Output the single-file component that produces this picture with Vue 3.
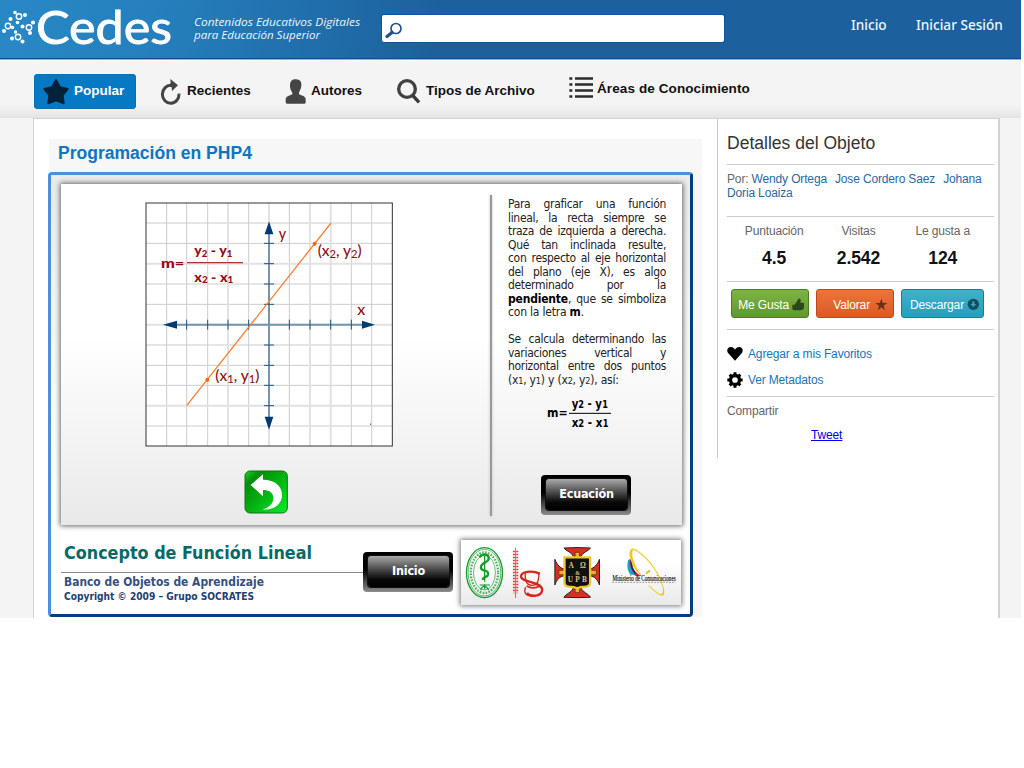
<script setup>
const columns = [80, 140, 203, 264, 326, 387, 448, 510, 572, 634, 695]
const rows = [85, 146, 207, 268, 329, 390, 451, 512, 572, 633, 694]
const heavyColumns = [264, 387, 510, 572]
const heavyRows = [207, 390, 633]
const xTicks = [140, 203, 264, 326, 448, 510, 572, 634]
const yTicks = [146, 207, 268, 329, 451, 512, 572, 633]
const firstParagraph = [
  'Para graficar una función',
  'lineal, la recta siempre se',
  'traza de izquierda a derecha.',
  'Qué tan inclinada resulte,',
  'con respecto al eje horizontal',
  'del plano (eje X), es algo',
  'determinado por la',
]
const secondParagraph = [
  'Se calcula determinando las',
  'variaciones vertical y',
  'horizontal entre dos puntos',
]
const stats = [
  { label: 'Puntuación', value: '4.5' },
  { label: 'Visitas', value: '2.542' },
  { label: 'Le gusta a', value: '124' },
]
</script>

<template>
  <div class="page">
    <header class="header">
      <svg class="brand" width="370" height="58" viewBox="0 0 370 58">
        <g fill="#fff">
          <circle cx="15" cy="12.5" r="1.8" /><circle cx="25" cy="15" r="2" /><circle cx="10.5" cy="19" r="2" />
          <circle cx="4" cy="31" r="2" /><circle cx="17.5" cy="22.5" r="1.8" /><circle cx="12.5" cy="27.5" r="1.7" />
          <circle cx="22.5" cy="26.5" r="2" /><circle cx="33" cy="22.5" r="2" /><circle cx="30" cy="33" r="2" />
          <circle cx="15.5" cy="32" r="1.7" /><circle cx="12" cy="38.5" r="2" /><circle cx="22.5" cy="41.5" r="2" />
        </g>
        <g fill="none" stroke="#fff" stroke-width="1.4">
          <circle cx="19" cy="16.5" r="2.7" /><circle cx="8" cy="26" r="2.7" /><circle cx="29" cy="27.5" r="2.7" /><circle cx="18" cy="37" r="2.7" />
        </g>
        <text class="brand-name" x="36" y="43.5" textLength="136" lengthAdjust="spacingAndGlyphs">Cedes</text>
        <text class="tagline" x="194" y="25.5" textLength="166" lengthAdjust="spacingAndGlyphs">Contenidos Educativos Digitales</text>
        <text class="tagline" x="194" y="39" textLength="126" lengthAdjust="spacingAndGlyphs">para Educación Superior</text>
      </svg>
      <div class="search">
        <svg width="18" height="18" viewBox="0 0 18 18">
          <circle cx="11" cy="6.5" r="5" fill="none" stroke="#24508f" stroke-width="1.7" />
          <path d="M7 10.5L2 14.5" stroke="#24508f" stroke-width="3.2" stroke-linecap="round" />
        </svg>
      </div>
      <nav class="account"><a class="home">Inicio</a><a>Iniciar Sesión</a></nav>
    </header>

    <nav class="menu">
      <a class="item popular">
        <svg width="26" height="26" viewBox="131 237 78 78">
          <path d="M170 240L182 262L205 267L190 286L193 310L170 301L147 310L150 286L135 267L158 262Z" fill="#012339" stroke="#012339" stroke-width="6" stroke-linejoin="round" />
        </svg>
        <span>Popular</span>
      </a>
      <a class="item">
        <svg width="22" height="27" viewBox="483 234 66 81">
          <path d="M537 281A25 27 0 1 1 513 256" fill="none" stroke="#444" stroke-width="9" />
          <path d="M511 237L534 256L516 273L515 262Q511 258 505 260L512 248Z" fill="#444" />
        </svg>
        <span>Recientes</span>
      </a>
      <a class="item">
        <svg width="22" height="27" viewBox="855 234 66 81">
          <path d="M887 238C902 238 905 248 904 258C903 269 898 273 897 278V283C907 287 917 289 917 298V308Q916 311 913 311H861Q857 311 857 307V298C858 289 868 287 877 283V278C875 273 870 269 870 257C870 246 874 238 887 238Z" fill="#454545" />
        </svg>
        <span>Autores</span>
      </a>
      <a class="item">
        <svg width="26" height="27" viewBox="78 234 78 81">
          <circle cx="111" cy="267" r="25" fill="none" stroke="#424242" stroke-width="10" />
          <path d="M128 286L147 307" stroke="#383838" stroke-width="10" />
        </svg>
        <span>Tipos de Archivo</span>
      </a>
      <a class="item areas">
        <svg width="24" height="24" viewBox="597 234 72 72">
          <path d="M615 238.500H669M615 256.500H669M615 274.500H669M615 292.500H669" stroke="#2b2b2b" stroke-width="8" />
          <path d="M598 238.500H607M598 256.500H607M598 274.500H607M598 292.500H607" stroke="#2b2b2b" stroke-width="8" />
        </svg>
        <span>Áreas de Conocimiento</span>
      </a>
    </nav>

    <main class="content">
      <section class="object">
        <h1>Programación en PHP4</h1>
        <div class="player">
          <div class="board">
            <div class="figure">
              <svg class="graph" width="248" height="245" viewBox="15 22 744 735">
                <rect x="18" y="25" width="739" height="729" fill="#fff" />
                <g stroke="#ccc" stroke-width="3">
                  <path v-for="x in columns" :key="'c' + x" :d="`M${x} 25V754`" />
                  <path v-for="y in rows" :key="'r' + y" :d="`M18 ${y}H757`" />
                </g>
                <g stroke="#e2e2e2" stroke-width="6">
                  <path v-for="x in heavyColumns" :key="'hc' + x" :d="`M${x} 27V752`" />
                  <path v-for="y in heavyRows" :key="'hr' + y" :d="`M20 ${y}H755`" />
                </g>
                <rect x="18" y="25" width="739" height="729" fill="none" stroke="#333" stroke-width="3" />
                <g stroke="#7594b4" stroke-width="6"><path d="M95 390H680" /><path d="M387 105V680" /></g>
                <g stroke="#245280" stroke-width="3">
                  <path v-for="x in xTicks" :key="'x' + x" :d="`M${x} 375V405`" />
                  <path v-for="y in yTicks" :key="'y' + y" :d="`M372 ${y}H402`" />
                </g>
                <g fill="#003a70">
                  <path d="M69 390L111 378V402Z" /><path d="M705 390L666 378V402Z" />
                  <path d="M387 80L400 119H374Z" /><path d="M387 705L400 666H374Z" />
                </g>
                <path d="M140 633L573 85" stroke="#f58233" stroke-width="4" />
                <circle cx="202" cy="555" r="6" fill="#f60" /><circle cx="524" cy="147" r="6" fill="#f60" />
                <rect x="690" y="687" width="3" height="3" fill="#222" />
                <g class="math">
                  <text x="416" y="133" textLength="22" lengthAdjust="spacingAndGlyphs">y</text>
                  <text x="652" y="361" textLength="24" lengthAdjust="spacingAndGlyphs">x</text>
                  <text x="533" y="185" textLength="132" lengthAdjust="spacingAndGlyphs">(x<tspan class="sub" dy="4">2</tspan><tspan dy="-4">, y</tspan><tspan class="sub" dy="4">2</tspan><tspan dy="-4">)</tspan></text>
                  <text x="226" y="560" textLength="132" lengthAdjust="spacingAndGlyphs">(x<tspan class="sub" dy="4">1</tspan><tspan dy="-4">, y</tspan><tspan class="sub" dy="4">1</tspan><tspan dy="-4">)</tspan></text>
                </g>
                <g class="slope">
                  <text x="63" y="220" textLength="70" lengthAdjust="spacingAndGlyphs">m=</text>
                  <text x="163" y="182" textLength="114" lengthAdjust="spacingAndGlyphs">y<tspan class="sub" dy="4">2</tspan><tspan dy="-4"> - y</tspan><tspan class="sub" dy="4">1</tspan></text>
                  <text x="163" y="262" textLength="117" lengthAdjust="spacingAndGlyphs">x<tspan class="sub" dy="4">2</tspan><tspan dy="-4"> - x</tspan><tspan class="sub" dy="4">1</tspan></text>
                  <path d="M141 204H309" stroke="#a33" stroke-width="4" />
                </g>
              </svg>
              <svg class="back" width="44" height="44" viewBox="614 59 132 132">
                <defs>
                  <linearGradient id="leaf" x1="0" y1="0" x2="1" y2="1">
                    <stop offset="0" stop-color="#19d92c" /><stop offset=".18" stop-color="#078d0b" /><stop offset=".4" stop-color="#04a50c" /><stop offset="1" stop-color="#05ed27" />
                  </linearGradient>
                </defs>
                <rect x="617" y="62" width="127" height="126" rx="15" fill="url(#leaf)" stroke="#147317" stroke-width="3" />
                <path d="M634 104L671 72V88C708 88 728 108 728 134C728 160 706 180 669 178C694 170 704 155 702 139C699 125 688 119 671 119V138Z" fill="#fff" />
              </svg>
            </div>
            <div class="divider"></div>
            <div class="lesson">
              <div class="prose">
                <p v-for="line in firstParagraph" :key="line">{{ line }}</p>
                <p><span><b>pendiente</b>,</span> que se simboliza</p>
                <p class="last">con la letra <b>m</b>.</p>
                <p class="gap"></p>
                <p v-for="line in secondParagraph" :key="line">{{ line }}</p>
                <p class="last">(x<small>1</small>, y<small>1</small>) y (x<small>2</small>, y<small>2</small>), así:</p>
              </div>
              <svg class="formula" width="64" height="34" viewBox="201 680 192 102">
                <text x="201" y="744" textLength="62" lengthAdjust="spacingAndGlyphs">m=</text>
                <text x="275" y="717" textLength="91" lengthAdjust="spacingAndGlyphs">y<tspan class="sub">2</tspan> - y</text><text class="sub" x="367" y="717" textLength="17" lengthAdjust="spacingAndGlyphs">1</text>
                <text x="275" y="772" textLength="92" lengthAdjust="spacingAndGlyphs">x<tspan class="sub">2</tspan> - x</text><text class="sub" x="368" y="772" textLength="17" lengthAdjust="spacingAndGlyphs">1</text>
                <path d="M267 732H393" stroke="#000" stroke-width="3" />
              </svg>
              <button class="dark"><span>Ecuación</span></button>
            </div>
          </div>
          <footer class="caption">
            <div class="titles">
              <svg width="303" height="70" viewBox="0 0 303 70">
                <text class="concept" x="4" y="22" textLength="248" lengthAdjust="spacingAndGlyphs">Concepto de Función Lineal</text>
                <path d="M1 35.500H303" stroke="#888" />
                <text class="bank" x="4" y="49" textLength="200" lengthAdjust="spacingAndGlyphs">Banco de Objetos de Aprendizaje</text>
                <text class="copy" x="4" y="63" textLength="190" lengthAdjust="spacingAndGlyphs">Copyright © 2009 – Grupo SOCRATES</text>
              </svg>
            </div>
            <button class="dark"><span>Inicio</span></button>
            <div class="sponsors">
              <svg width="220" height="65" viewBox="333 225 661 195">
                <g fill="none" stroke="#179a2e">
                  <ellipse cx="403.500" cy="323" rx="54" ry="75" stroke-width="4" />
                  <ellipse cx="403.500" cy="323" rx="49" ry="70" stroke-width="2" />
                  <ellipse cx="403.500" cy="323" rx="41" ry="61" stroke-width="7" stroke-dasharray="5 4" opacity=".75" />
                  <ellipse cx="403.500" cy="323" rx="33" ry="52" stroke-width="2" />
                  <path d="M404 270V350" stroke-width="4" />
                  <path d="M389 277C396 263 418 266 416 282C415 294 391 291 393 309C396 322 417 312 414 329C412 339 397 334 399 345" stroke-width="7" />
                  <path d="M389 360H420M392 375Q402 352 416 375M404 358V373" stroke-width="3.500" />
                </g>
                <g fill="none" stroke="#e03a35">
                  <path d="M497 248V399" stroke-width="2.500" />
                  <path d="M492 257V385M502 257V385" stroke-width="6" stroke-dasharray="5 4" />
                </g>
                <g fill="none" stroke="#d9251d">
                  <path d="M570 326C548 316 513 318 513 335C514 353 575 348 577 374C577 394 543 398 531 384" stroke-width="7" />
                  <path d="M526 323C525 351 531 361 547 361C562 361 567 350 567 323M527 367C521 383 526 393 548 394" stroke-width="4" />
                  <path d="M530 363Q550 374 570 363" stroke-width="5" />
                </g>
                <g stroke="#222" stroke-width="3" fill="#dc2d20">
                  <path d="M642 249Q682 246 722 249C717 258 698 261 693 275H671C667 261 648 258 642 249Z" />
                  <path d="M642 397Q682 399 722 397C717 386 698 383 693 368H671C667 383 648 386 642 397Z" />
                  <path d="M615 283C621 299 632 310 643 312V333C631 333 620 344 615 360Z" />
                  <path d="M749 283C743 299 733 310 720 312V333C733 333 744 344 749 360Z" />
                </g>
                <path d="M676 262H689V383H676ZM627 316H740V329H627Z" fill="#e6b32b" stroke="#4a2317" stroke-width="2" />
                <path d="M644 277H721V353Q721 363 708 365Q690 366 682 370Q674 366 657 365Q644 363 644 353Z" fill="#111" stroke="#ecc82f" stroke-width="7" />
                <g class="shield"><text x="656" y="308" textLength="52" lengthAdjust="spacing">A Ω</text><text x="676" y="329" class="tiny">&amp;</text><text x="654" y="352" textLength="57" lengthAdjust="spacing">UPB</text></g>
                <path d="M840 282C832 302 834 317 852 329C861 336 872 336 875 331C858 327 846 308 846 287Z" fill="#ce2440" />
                <path d="M835 286C831 302 832 316 842 329H858C844 318 838 303 840 282Z" fill="#19a4c5" />
                <path d="M845 283Q841 307 858 327" fill="none" stroke="#173370" stroke-width="5" />
                <path d="M862 258C848 246 843 262 852 288C860 310 868 322 877 332C856 320 840 288 839 266C840 247 853 246 862 258Z" fill="#f5c51b" />
                <path d="M854 253C900 277 940 342 942 380C943 397 929 394 897 361" fill="none" stroke="#f0cf3b" stroke-width="3.500" />
                <path d="M939 362C943 386 936 394 922 384Q947 401 942 375Z" fill="#f0bf1a" />
                <path d="M889 325L901 317" stroke="#e6bb2e" stroke-width="6" />
                <text class="ministry" x="788" y="347" textLength="190" lengthAdjust="spacingAndGlyphs">Ministerio de Comunicaciones</text>
                <path d="M788 352H978" stroke="#777" stroke-width="3" stroke-dasharray="4 5" />
              </svg>
            </div>
          </footer>
        </div>
      </section>

      <aside class="details">
        <h2>Detalles del Objeto</h2>
        <p class="authors">Por: <a>Wendy Ortega</a><a class="next">Jose Cordero Saez</a><a class="next">Johana</a><br /><a>Doria Loaiza</a></p>
        <div class="stats">
          <div v-for="stat in stats" :key="stat.label"><span>{{ stat.label }}</span><strong>{{ stat.value }}</strong></div>
        </div>
        <div class="actions">
          <a class="btn green">Me Gusta
            <svg width="13" height="13" viewBox="244 54 39 39"><path d="M245 74H252L265 55Q273 58 269 68H278Q282 70 280 76V84Q277 91 270 91H251Q246 91 245 86Z" fill="#2c471a" /></svg>
          </a>
          <a class="btn orange">Valorar
            <svg width="13" height="13" viewBox="498 54 39 39"><path d="M517 56L521.500 69H535L524 77L528 91L517 82L506 91L510 77L499 69H512.500Z" fill="#6c2f17" /></svg>
          </a>
          <a class="btn cyan">Descargar
            <svg width="13" height="13" viewBox="774 57 39 39"><circle cx="793" cy="76" r="17" fill="#144f61" /><path d="M790 67H796V75H802L793 84L784 75H790Z" fill="#38a4be" /></svg>
          </a>
        </div>
        <div class="links">
          <a><svg width="16" height="16" viewBox="52 201 48 48"><path d="M76 245L56 223C49 214 55 204 63 204C71 204 74 209 76 212C78 209 81 204 89 204C97 204 103 214 96 223Z" fill="#000" /></svg>Agregar a mis Favoritos</a>
          <a><svg width="16" height="16" viewBox="52 277 48 48"><circle cx="76" cy="301" r="13.500" fill="none" stroke="#000" stroke-width="10" /><path d="M76 278V286M76 316V324M53 301H61M91 301H99M60 285L66 291M86 311L92 317M60 317L66 311M86 291L92 285" stroke="#000" stroke-width="9" /></svg>Ver Metadatos</a>
        </div>
        <div class="share"><span>Compartir</span><a>Tweet</a></div>
      </aside>
    </main>
  </div>
</template>

<style>
body { background: #fff; }
</style>

<style scoped>
* { box-sizing: border-box; }
.page { width: 1021px; height: 618px; background: #f4f4f4; font-family: "Liberation Sans", Arial, sans-serif; font-size: 12px; letter-spacing: -.15px; color: #666; }
.header { height: 60px; display: flex; background: linear-gradient(100deg, #2888c5 0, #2580bd 15%, #1c619d 43%, #1c619d 100%); border-bottom: 1px solid #8ab6de; box-shadow: inset 0 -1px #0a4e91; }
svg { overflow: visible; letter-spacing: 0; }
.brand { flex: none; display: block; }
.brand-name { font: 47px Lato, sans-serif; fill: #fff; stroke: #fff; stroke-width: .9px; }
.tagline { font: italic 11.5px "Open Sans", sans-serif; fill: #e9f4fc; }
.search { margin: 15px 0 0 12px; width: 342px; height: 27px; background: #fff; border-radius: 2px; padding: 7px 0 0 3px; box-shadow: 0 0 0 1px #0c559a; }
.search svg { display: block; }
.account { margin-left: 127px; display: flex; padding-top: 15px; font: 500 13.6px/20px "Noto Sans", sans-serif; letter-spacing: 0; color: #eff6fc; white-space: nowrap; }
.home { width: 65px; }
.menu { height: 58px; padding: 13px 0 0 34px; display: grid; grid-template-columns: 127px 124px 111px 173px auto; border-top: 1px solid #fff; background: linear-gradient(#f4f4f4 78%, #e4e4e4 100%); color: #111; font-size: 13.5px; letter-spacing: 0; font-weight: bold; }
.item { display: flex; height: 35px; align-items: center; gap: 4px; white-space: nowrap; }
.item svg { flex: none; }
.item span { position: relative; top: -1px; }
.popular { width: 102px; background: #0679c4; border-radius: 4px; color: #fff; padding-left: 9px; gap: 5px; box-shadow: inset 0 0 0 1px #0671b8; }
.areas { height: 30px; letter-spacing: .1px; }
.content { width: 967px; height: 500px; margin-left: 33px; display: flex; background: #fff; border: solid #d2d2d2; border-width: 1px 2px 0 1px; }
.object { width: 682px; flex: none; padding: 20px 0 0 14px; }
h1 { margin: 0 0 0 1px; height: 33px; width: 653px; padding-left: 9px; background: #f7f7f7; color: #0f76be; font-size: 17.55px; letter-spacing: 0; line-height: 29px; }
.player { width: 645px; height: 445px; padding: 9px 9px 0; border: 3px solid; border-color: #4a90df #003e7e #003e7e #4a90df; border-radius: 4px; background: linear-gradient(#ebebeb, #fff 70%); box-shadow: 9px 0 #f7f7f7; }
.board { height: 341px; width: 621px; margin-left: 1px; display: flex; background: linear-gradient(#fff 45%, #e9e9e9); box-shadow: 0 0 5px 1px #666; }
.figure { width: 429px; flex: none; padding: 18px 0 0 84px; }
.graph { display: block; }
.back { display: block; margin: 23px 0 0 99px; }
.math { font: 500 44px Lato, sans-serif; fill: #901015; }
.math .sub { font-size: 32px; }
.slope { font: 900 38px Lato, sans-serif; fill: #960b14; }
.slope .sub { font-size: 26px; }
.divider { width: 2px; height: 321px; margin-top: 11px; background: #999; box-shadow: 0 0 3px #bbb; }
.lesson { width: 190px; padding: 14px 0 0 16px; color: #222; }
.prose { width: 158px; font: 12px/13.53px "DejaVu Sans Condensed", "DejaVu Sans", sans-serif; letter-spacing: -.32px; }
.prose p { margin: 0; height: 13.53px; white-space: nowrap; text-align: justify; text-align-last: justify; }
.prose .last { text-align-last: left; letter-spacing: -.2px; }
.prose b { color: #000; letter-spacing: -.2px; }
.prose small { font-size: 9px; }
.formula { display: block; margin: 9px 0 0 39px; font: bold 37px "DejaVu Sans Condensed", "DejaVu Sans", sans-serif; }
.formula .sub { font-size: 30px; }
.dark { display: block; flex: none; width: 90px; height: 40px; padding: 4px 4px 5px 5px; border: 0; border-radius: 4px; background: linear-gradient(#000 0 45%, #8d8d8d); font: bold 12.5px "DejaVu Sans Condensed", "DejaVu Sans", sans-serif; letter-spacing: -.2px; color: #fff; }
.dark span { display: block; height: 31px; line-height: 30px; border-radius: 3px; background: linear-gradient(#aaa, #555 38%, #080808 75%, #000); box-shadow: 0 0 0 1px #111; }
.lesson .dark { margin: 45px 0 0 33px; }
.caption { display: flex; padding-top: 12px; }
.titles { width: 303px; flex: none; }
.titles svg { display: block; }
.titles text { font-family: "DejaVu Sans Condensed", "DejaVu Sans", sans-serif; font-weight: bold; }
.concept { font-size: 18px; fill: #076a68; }
.bank { font-size: 12px; fill: #37507d; }
.copy { font-size: 10.4px; fill: #223e70; }
.caption .dark { margin-top: 15px; }
.sponsors { flex: none; margin: 3px 0 0 8px; width: 220px; height: 65px; background: linear-gradient(#fff 35%, #e9e9e9); box-shadow: 0 0 5px 1px #777; }
.sponsors svg { display: block; }
.shield { font: bold 22px "Liberation Serif", serif; fill: #dfc378; }
.shield .tiny { font-size: 17px; }
.ministry { font: 22px "Liberation Serif", serif; fill: #111; stroke: #111; stroke-width: .5px; }
.details { height: 339px; width: 279px; margin-left: 1px; padding-left: 9px; border-left: 1px solid #c8c8c8; }
.details > * { width: 267px; margin: 0; border-bottom: 1px solid #ccc; }
h2 { height: 46px; font-size: 17.55px; letter-spacing: 0; font-weight: normal; line-height: 48px; color: #333; }
.authors { height: 52px; padding-top: 8px; line-height: 13.5px; white-space: nowrap; }
.authors a { color: #2b67a1; }
.authors .next { margin-left: 8px; }
.stats { height: 65px; padding-left: 5px; display: grid; grid-template-columns: 84.3px 84.3px 84.3px; text-align: center; }
.stats span { display: block; padding-top: 7px; line-height: 14px; }
.stats strong { display: block; margin-top: 9px; font-size: 17.55px; letter-spacing: -.1px; line-height: 22px; color: #111; }
.actions { height: 48px; display: flex; padding: 7px 0 0 4px; gap: 7px; }
.btn { width: 78px; height: 29px; display: flex; justify-content: flex-end; align-items: center; gap: 2px; padding: 2px 5px 0 0; color: #fff; border: 1px solid; border-radius: 3px; white-space: nowrap; }
.btn svg { flex: none; }
.green { background: linear-gradient(#7eb446, #60982f); border-color: #488020; gap: 3px; padding-right: 3px; }
.orange { background: linear-gradient(#ed7439, #dc5926); border-color: #b94918; gap: 5px; }
.cyan { width: 83px; background: linear-gradient(#41b0ca, #22a0bd); border-color: #177d93; padding-right: 3px; gap: 3px; }
.links { height: 67px; padding-top: 11px; color: #1775b9; }
.links a { display: flex; height: 26px; gap: 5px; align-items: center; line-height: 24px; }
.share { height: 61px; padding-top: 7px; border: 0; line-height: 14px; }
.share span { display: block; }
.share a { display: block; margin: 10px 0 0 84px; color: #00e; text-decoration: underline; }
</style>
